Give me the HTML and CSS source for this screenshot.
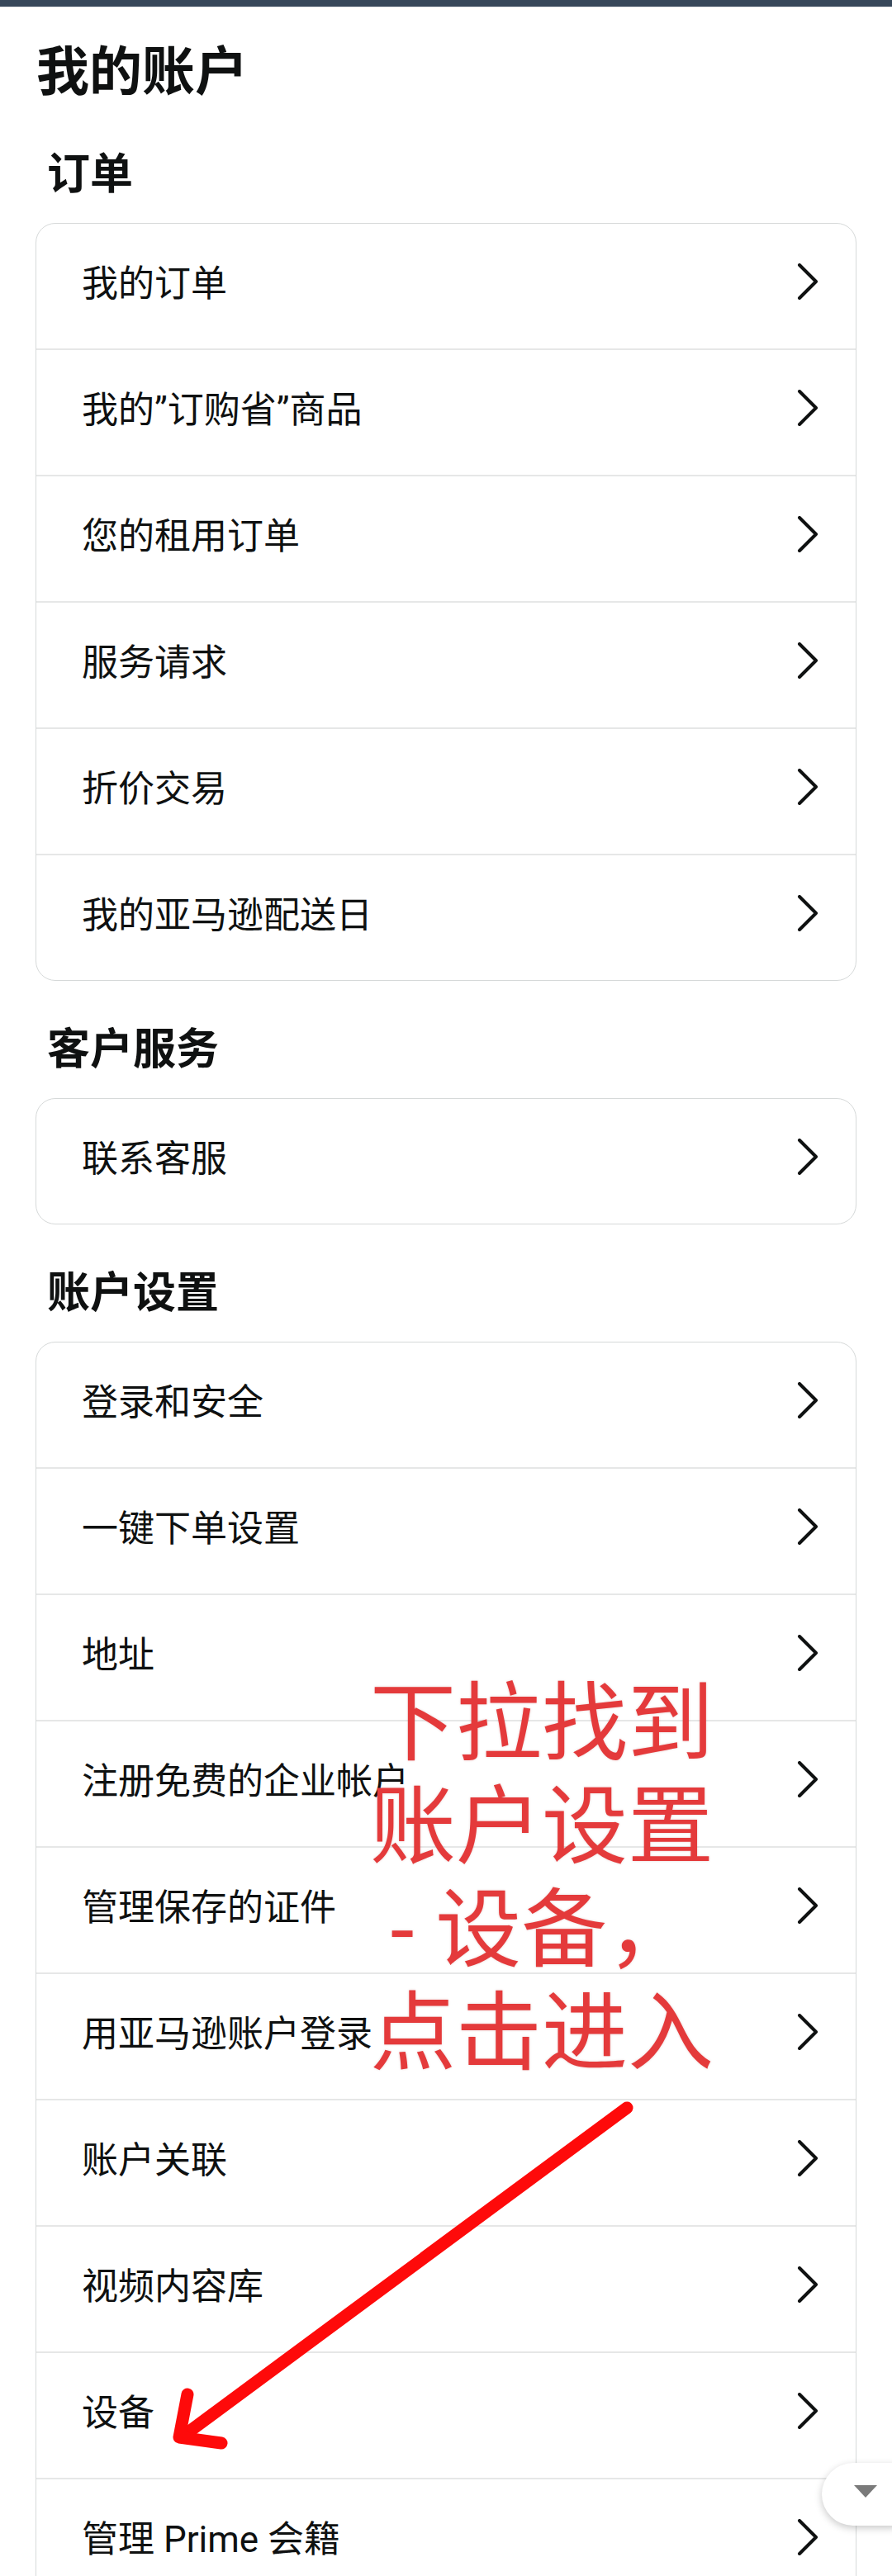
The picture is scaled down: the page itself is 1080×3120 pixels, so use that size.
FILE: index.html
```html
<!DOCTYPE html>
<html lang="zh-CN">
<head>
<meta charset="utf-8">
<title>我的账户</title>
<link rel="stylesheet" href="styles.css">
</head>
<body>
<div class="topbar"></div>
<main class="page">
  <h1 class="page-title">我的账户</h1>

  <section class="group">
    <h2 class="group-title">订单</h2>
    <ul class="card">
      <li class="row"><span class="label">我的订单</span><svg class="chev" viewBox="0 0 26 44"><polyline points="3,2 23,22 3,42"/></svg></li>
      <li class="row"><span class="label">我的”订购省”商品</span><svg class="chev" viewBox="0 0 26 44"><polyline points="3,2 23,22 3,42"/></svg></li>
      <li class="row"><span class="label">您的租用订单</span><svg class="chev" viewBox="0 0 26 44"><polyline points="3,2 23,22 3,42"/></svg></li>
      <li class="row"><span class="label">服务请求</span><svg class="chev" viewBox="0 0 26 44"><polyline points="3,2 23,22 3,42"/></svg></li>
      <li class="row"><span class="label">折价交易</span><svg class="chev" viewBox="0 0 26 44"><polyline points="3,2 23,22 3,42"/></svg></li>
      <li class="row"><span class="label">我的亚马逊配送日</span><svg class="chev" viewBox="0 0 26 44"><polyline points="3,2 23,22 3,42"/></svg></li>
    </ul>
  </section>

  <section class="group">
    <h2 class="group-title">客户服务</h2>
    <ul class="card">
      <li class="row"><span class="label">联系客服</span><svg class="chev" viewBox="0 0 26 44"><polyline points="3,2 23,22 3,42"/></svg></li>
    </ul>
  </section>

  <section class="group">
    <h2 class="group-title">账户设置</h2>
    <ul class="card">
      <li class="row"><span class="label">登录和安全</span><svg class="chev" viewBox="0 0 26 44"><polyline points="3,2 23,22 3,42"/></svg></li>
      <li class="row"><span class="label">一键下单设置</span><svg class="chev" viewBox="0 0 26 44"><polyline points="3,2 23,22 3,42"/></svg></li>
      <li class="row"><span class="label">地址</span><svg class="chev" viewBox="0 0 26 44"><polyline points="3,2 23,22 3,42"/></svg></li>
      <li class="row"><span class="label">注册免费的企业帐户</span><svg class="chev" viewBox="0 0 26 44"><polyline points="3,2 23,22 3,42"/></svg></li>
      <li class="row"><span class="label">管理保存的证件</span><svg class="chev" viewBox="0 0 26 44"><polyline points="3,2 23,22 3,42"/></svg></li>
      <li class="row"><span class="label">用亚马逊账户登录</span><svg class="chev" viewBox="0 0 26 44"><polyline points="3,2 23,22 3,42"/></svg></li>
      <li class="row"><span class="label">账户关联</span><svg class="chev" viewBox="0 0 26 44"><polyline points="3,2 23,22 3,42"/></svg></li>
      <li class="row"><span class="label">视频内容库</span><svg class="chev" viewBox="0 0 26 44"><polyline points="3,2 23,22 3,42"/></svg></li>
      <li class="row"><span class="label">设备</span><svg class="chev" viewBox="0 0 26 44"><polyline points="3,2 23,22 3,42"/></svg></li>
      <li class="row"><span class="label">管理 Prime 会籍</span><svg class="chev" viewBox="0 0 26 44"><polyline points="3,2 23,22 3,42"/></svg></li>
    </ul>
  </section>
</main>

<!-- hand-drawn hint laid over the list -->
<div class="hint">下拉找到<br>账户设置<br>- 设备，<br>点击进入</div>
<svg class="hint-arrow" viewBox="0 0 1080 3120">
  <path d="M759 2553 L221 2951"/>
  <path d="M227 2900 L217 2952 L268 2959"/>
</svg>

<button class="scroll-btn" type="button" aria-label="向下滚动"><span class="scroll-tri"></span></button>
</body>
</html>
```

FILE: styles.css
```css
html, body {
  margin: 0;
  padding: 0;
  background: #ffffff;
}

body {
  position: relative;
  width: 1080px;
  height: 3120px;
  overflow: hidden;
  font-family: Roboto, "Noto Sans CJK SC", sans-serif;
  color: #0f1111;
}

.topbar {
  height: 8px;
  background: #37475a;
  border-bottom: 1px solid #e3e6e8;
}

.page {
  padding: 39px 43px 0 43px;
}

.page-title {
  margin: 0;
  font-size: 64px;
  line-height: 80px;
  font-weight: 700;
  padding-left: 1px;
}

.group {
  margin-top: 52px;
}

.group-title {
  margin: 0 0 26px 0;
  padding-left: 14px;
  font-size: 52px;
  line-height: 64px;
  font-weight: 700;
}

.card {
  list-style: none;
  margin: 0;
  padding: 0;
  border: 1px solid #d6d9d9;
  border-radius: 24px;
  overflow: hidden;
}

.row {
  display: flex;
  align-items: center;
  justify-content: space-between;
  box-sizing: border-box;
  height: 151px;
  padding: 0 45px 6px 55px;
  font-size: 44px;
  line-height: 60px;
}

.row + .row {
  height: 153px;
  border-top: 2px solid #e6e7e7;
}

.label {
  white-space: nowrap;
}

.chev {
  width: 26px;
  height: 44px;
  margin-top: -6px;
  flex: none;
}

.chev polyline {
  fill: none;
  stroke: #0f1111;
  stroke-width: 4;
  stroke-linecap: round;
  stroke-linejoin: round;
}

.hint {
  position: absolute;
  left: 446px;
  top: 2026px;
  width: 420px;
  text-align: center;
  font-family: Roboto, "Noto Sans CJK SC", sans-serif;
  font-size: 104px;
  line-height: 125px;
  font-weight: 400;
  color: #e43a3b;
  text-shadow: 0 0 3px rgba(120, 0, 0, 0.18);
  white-space: nowrap;
}

.hint-arrow {
  position: absolute;
  left: 0;
  top: 0;
  width: 1080px;
  height: 3120px;
  pointer-events: none;
}

.hint-arrow path {
  fill: none;
  stroke: #fe0a0a;
  stroke-width: 15;
  stroke-linecap: round;
  stroke-linejoin: round;
}

.scroll-btn {
  position: absolute;
  left: 995px;
  top: 2983px;
  width: 120px;
  height: 76px;
  padding: 0;
  border: none;
  border-radius: 38px;
  background: #ffffff;
  box-shadow: 0 3px 10px rgba(0, 0, 0, 0.22);
}

.scroll-tri {
  position: absolute;
  left: 39px;
  top: 27px;
  width: 0;
  height: 0;
  border-left: 14px solid transparent;
  border-right: 14px solid transparent;
  border-top: 15px solid #7a7a7a;
}
```
